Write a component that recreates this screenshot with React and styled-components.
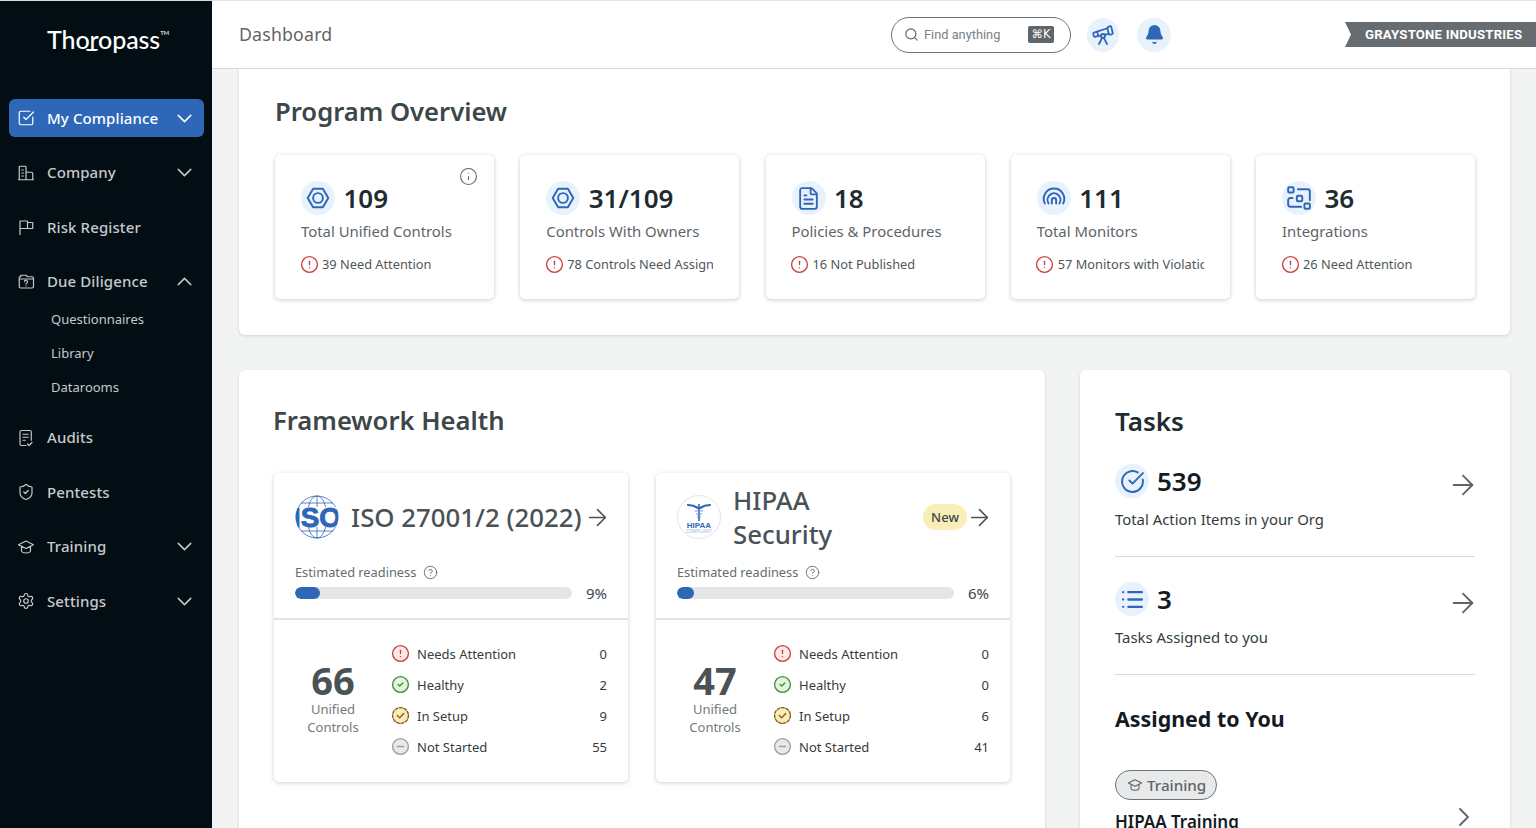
import React from 'react';
import styled, { createGlobalStyle } from 'styled-components';
import {
  ArrowRight,
  Bell,
  ChevronDown,
  ChevronRight,
  ChevronUp,
  CircleAlert,
  CircleCheck,
  CircleCheckBig,
  CircleHelp,
  CircleMinus,
  FileText,
  Info,
  List,
  Search,
  Settings,
  ShieldCheck,
  SquareCheckBig,
  Telescope,
} from 'lucide-react';

const BLUE = '#2f67b8';
const FONT = '"Noto Sans", "Open Sans", sans-serif';

const GlobalStyle = createGlobalStyle`
  html, body {
    margin: 0;
    height: 100%;
    overflow: hidden;
    background: #f2f3f3;
    font-family: ${FONT};
  }
  * { box-sizing: border-box; }
`;

const Page = styled.div`
  display: flex;
  height: 100vh;
  overflow: hidden;
`;

const Sidebar = styled.aside`
  width: 212px;
  flex: none;
  background: #030d14;
  border-top: 1px solid #d8dadb;
  padding: 0 8px 0 9px;
`;

const LogoRow = styled.div`
  height: 98px;
  padding: 20px 0 0 38px;
`;

const Logo = styled.div`
  position: relative;
  display: inline-block;
  font-family: Lato, ${FONT};
  font-size: 25px;
  font-weight: 500;
  letter-spacing: -0.1px;
  line-height: 36px;
  color: #fff;
  sup {
    font-size: 6px;
    line-height: 0;
    vertical-align: 14px;
  }
  &::after {
    content: '';
    position: absolute;
    left: 39px;
    top: 28px;
    width: 12px;
    height: 2px;
    background: #fff;
    border-radius: 0 0 4px 4px;
  }
`;

const NavItem = styled.div`
  display: flex;
  align-items: center;
  height: 38px;
  margin-bottom: ${(p) => (p.$tight ? '1px' : '16.5px')};
  padding: 0 7px 0 8px;
  border-radius: 6px;
  background: ${(p) => (p.$active ? BLUE : 'transparent')};
  color: ${(p) => (p.$active ? '#fff' : '#c6c9cb')};
  font-size: 15px;
  font-weight: 500;
  letter-spacing: 0.1px;
  svg { flex: none; }
`;

const NavLabel = styled.span`
  flex: 1;
  margin: -1px 0 0 12px;
`;

const SubItem = styled.div`
  height: 34px;
  padding-left: 42px;
  line-height: 34px;
  font-size: 13px;
  color: #c6c9cb;
`;

const SubList = styled.div`
  margin-bottom: 15px;
`;

const Main = styled.div`
  flex: 1;
  min-width: 0;
  display: flex;
  flex-direction: column;
`;

const Header = styled.header`
  height: 69px;
  flex: none;
  display: flex;
  align-items: center;
  padding: 0 0 0 27px;
  background: #fff;
  border-top: 1px solid #e3e4e5;
  border-bottom: 1px solid #d9dadb;
`;

const PageTitle = styled.div`
  flex: 1;
  margin-top: -1px;
  font-size: 17.7px;
  letter-spacing: 0.2px;
  color: #5f6568;
`;

const SearchBox = styled.div`
  width: 180px;
  height: 36px;
  display: flex;
  align-items: center;
  padding: 0 16px 0 12px;
  border: 1px solid #6d7376;
  border-radius: 18px;
  font-family: Roboto, sans-serif;
  font-size: 12.8px;
  color: #7c8285;
  svg { color: #5f6568; }
`;

const SearchText = styled.span`
  flex: 1;
  margin-left: 5px;
`;

const Kbd = styled.span`
  width: 26px;
  height: 17px;
  background: #5f6568;
  border-radius: 2px;
  color: #fff;
  font-size: 11.5px;
  line-height: 17px;
  text-align: center;
  font-family: "DejaVu Sans", sans-serif;
`;

const RoundButton = styled.div`
  width: ${(p) => p.$w}px;
  height: 34px;
  margin-left: ${(p) => p.$gap}px;
  display: flex;
  align-items: center;
  justify-content: center;
  border-radius: 50%;
  background: #e8f2fd;
  color: ${BLUE};
`;

const OrgBadge = styled.div`
  width: 191px;
  height: 25px;
  margin-left: 174px;
  padding-left: 20px;
  background: #666c6f;
  clip-path: polygon(0 0, 100% 0, 100% 100%, 0 100%, 6px 50%);
  font-family: Roboto, sans-serif;
  font-size: 13.2px;
  font-weight: 700;
  line-height: 25px;
  letter-spacing: 0.2px;
  color: #fff;
  white-space: nowrap;
`;

const Content = styled.div`
  flex: 1;
  min-height: 0;
  overflow: hidden;
  padding: 0 26px 0 27px;
`;

const Panel = styled.section`
  background: #fff;
  border-radius: 6px;
  box-shadow: 0 1px 3px rgba(30, 40, 50, 0.16);
`;

const OverviewPanel = styled(Panel)`
  height: 266px;
  padding: 23px 35px 0 36px;
  border-radius: 0 0 6px 6px;
`;

const PanelTitle = styled.h2`
  margin: 0 0 0 ${(p) => p.$shift || 0}px;
  font-size: 25.6px;
  line-height: 40px;
  font-weight: 600;
  color: #3d4649;
`;

const StatGrid = styled.div`
  display: grid;
  grid-template-columns: repeat(5, 219px);
  justify-content: space-between;
  margin-top: 23px;
`;

const StatCard = styled.div`
  position: relative;
  height: 144px;
  padding: 26px 26px 0 26px;
  border-radius: 5px;
  background: #fff;
  box-shadow: 0 1px 4px rgba(30, 40, 50, 0.24);
`;

const InfoMark = styled.span`
  position: absolute;
  top: 12px;
  right: 16px;
  color: #5f6568;
  display: flex;
`;

const StatHead = styled.div`
  display: flex;
  align-items: center;
  gap: 8.5px;
`;

const IconCircle = styled.span`
  width: 34px;
  height: 34px;
  flex: none;
  display: flex;
  align-items: center;
  justify-content: center;
  border-radius: 50%;
  background: #e8f2fd;
  color: ${BLUE};
`;

const StatValue = styled.span`
  font-size: 26px;
  line-height: 34px;
  font-weight: 600;
  color: ${(p) => p.$color || '#212b30'};
`;

const StatLabel = styled.div`
  margin-top: 5px;
  font-size: 14.9px;
  line-height: 22px;
  color: #5f6568;
  white-space: nowrap;
`;

const AlertRow = styled.div`
  display: flex;
  align-items: center;
  gap: 3.5px;
  margin-top: 11px;
  margin-left: -1.5px;
  height: 22px;
  font-size: 12.8px;
  color: #4f575b;
  white-space: nowrap;
  overflow: hidden;
  svg { flex: none; color: #c8413d; }
`;

const BottomRow = styled.div`
  display: grid;
  grid-template-columns: 806px 1fr;
  gap: 35px;
  margin-top: 35px;
`;

const FrameworkPanel = styled(Panel)`
  height: 520px;
  padding: 31px 35px 0;
`;

const FrameworkGrid = styled.div`
  display: grid;
  grid-template-columns: 354px 354px;
  gap: 28px;
  margin-top: 32px;
`;

const FrameworkCard = styled.div`
  height: 309px;
  border-radius: 5px;
  background: #fff;
  box-shadow: 0 1px 4px rgba(30, 40, 50, 0.22);
`;

const CardTop = styled.div`
  height: 147px;
  padding: 9px 21px 0;
  border-bottom: 2px solid #e2e3e4;
`;

const CardHead = styled.div`
  height: 70px;
  display: flex;
  align-items: center;
  color: #4a5256;
`;

const FrameworkName = styled.div`
  flex: ${(p) => (p.$grow ? 1 : 'none')};
  margin: 0 2px 0 12px;
  font-size: 25.8px;
  line-height: 34px;
  font-weight: 500;
  color: #4a5256;
`;

const HeadArrow = styled.span`
  display: flex;
  margin-right: -4px;
`;

const NewTag = styled.span`
  width: 44px;
  height: 26px;
  margin-right: -1px;
  border-radius: 13px;
  background: #faeeb8;
  font-size: 13px;
  font-weight: 500;
  line-height: 26px;
  text-align: center;
  color: #3d4649;
`;

const ReadyLabel = styled.div`
  display: flex;
  align-items: center;
  gap: 7px;
  margin-top: 10px;
  height: 20px;
  font-size: 12.8px;
  color: #666c6f;
`;

const BarRow = styled.div`
  display: flex;
  align-items: center;
  justify-content: space-between;
  height: 22px;
  font-size: 15px;
  color: #3d4649;
`;

const BarTrack = styled.div`
  width: 277px;
  height: 12px;
  border-radius: 6px;
  background: #e4e5e6;
  overflow: hidden;
`;

const BarFill = styled.div`
  height: 100%;
  border-radius: 6px;
  background: ${BLUE};
`;

const CardBottom = styled.div`
  display: grid;
  grid-template-columns: 118px 1fr;
  padding: 18px 21px 0 0;
`;

const CountBox = styled.div`
  padding-top: 22px;
  text-align: center;
  font-size: 13px;
  line-height: 18px;
  color: #737a7d;
`;

const CountValue = styled.div`
  font-size: 38px;
  line-height: 40px;
  font-weight: 700;
  color: #4a5256;
`;

const StatusRow = styled.div`
  display: flex;
  align-items: center;
  height: 31px;
  font-size: 13px;
  color: #333c40;
`;

const StatusText = styled.span`
  flex: 1;
  margin-left: 7px;
`;

const StatusDot = styled.span`
  width: 19px;
  height: 19px;
  flex: none;
  display: flex;
  margin-left: -1px;
  border-radius: 50%;
  background: radial-gradient(circle, ${(p) => p.$bg} 0 8px, transparent 8.5px);
  color: ${(p) => p.$color};
`;

const TasksPanel = styled(Panel)`
  height: 520px;
  padding: 30px 35px 0;
`;

const TasksTitle = styled.h2`
  margin: 0;
  font-size: 26px;
  line-height: 42px;
  font-weight: 600;
  color: #212b30;
`;

const TaskBlock = styled.div`
  height: ${(p) => p.$h}px;
  padding-top: ${(p) => p.$top}px;
  border-bottom: 1px solid #d6d8d9;
`;

const TaskHead = styled.div`
  display: flex;
  align-items: center;
  gap: 8px;
  height: 34px;
  color: #5f6568;
`;

const TaskArrow = styled.span`
  margin: 8px -4px 0 auto;
  display: flex;
`;

const TaskLabel = styled.div`
  margin-top: 10px;
  font-size: 14.9px;
  line-height: 22px;
  color: #333c40;
`;

const AssignedTitle = styled.h3`
  margin: 28px 0 0;
  font-size: 21.4px;
  line-height: 32px;
  font-weight: 700;
  color: #141b1f;
`;

const Pill = styled.div`
  display: flex;
  align-items: center;
  gap: 4px;
  width: fit-content;
  height: 30px;
  margin-top: 35px;
  padding: 0 10px 0 11px;
  border: 1px solid #6d7376;
  border-radius: 15px;
  background: #e8e9ea;
  font-size: 15.2px;
  font-weight: 500;
  color: #5f6568;
`;

const AssignedRow = styled.div`
  display: flex;
  align-items: flex-start;
  justify-content: space-between;
  height: 24px;
  margin-top: 10px;
  font-size: 17px;
  line-height: 24px;
  font-weight: 600;
  color: #141b1f;
  svg { color: #5f6568; margin: -9px -5px 0 0; }
`;

const line = { fill: 'none', stroke: 'currentColor', strokeLinecap: 'round', strokeLinejoin: 'round' };

const Glyph = ({ size = 18, width = 1.6, children }) => (
  <svg width={size} height={size} viewBox="0 0 24 24" {...line} strokeWidth={width}>
    {children}
  </svg>
);

const BuildingIcon = () => (
  <Glyph>
    <path d="M3 21V4a1 1 0 0 1 1-1h7a1 1 0 0 1 1 1v17M12 11h7a2 2 0 0 1 2 2v8M2 21h20M6.5 8h2M6.5 12h2M6.5 16h2" />
  </Glyph>
);

const FlagIcon = () => (
  <Glyph>
    <path d="M4 22V4h10v10H4M14 6h7v8h-7" />
  </Glyph>
);

const FolderAskIcon = () => (
  <Glyph>
    <path d="M3 18V6a1 1 0 0 1 1-1h1V3h7l2 2h6a2 2 0 0 1 2 2v11a2 2 0 0 1-2 2H5a2 2 0 0 1-2-2ZM3 8h18" />
    <path d="M10 11.5a2 2 0 1 1 3 1.8c-.7.4-1 .8-1 1.4M12 17.2v.1" />
  </Glyph>
);

const AuditIcon = () => (
  <Glyph>
    <path d="M12 22H6a2 2 0 0 1-2-2V4a2 2 0 0 1 2-2h11a2 2 0 0 1 2 2v11M8 7h7M8 11h7M8 15h3M14 20l2 2 4-4" />
  </Glyph>
);

const CapIcon = ({ size = 18 }) => (
  <Glyph size={size}>
    <path d="M12 4 2 9l10 5 10-5-10-5ZM6 11.5V17c0 1.6 3 3 6 3s6-1.4 6-3v-5.500" />
  </Glyph>
);

const NutIcon = () => (
  <Glyph size={26} width={1.8}>
    <path d="M7.500 3.500h9L21.500 12l-5 8.500h-9L2.500 12l5-8.500Z" />
    <circle cx="12" cy="12" r="4.500" />
  </Glyph>
);

const MonitorIcon = () => (
  <Glyph size={26} width={1.8}>
    <path d="M3.500 17a9.500 9.500 0 1 1 17 0M7 17a6 6 0 1 1 10 0M10 17v-3a2 2 0 0 1 4 0v3" />
  </Glyph>
);

const IntegrationIcon = () => (
  <Glyph size={26} width={1.8}>
    <rect x="2" y="2" width="5" height="5" rx="1" />
    <rect x="10" y="10" width="5" height="5" rx="1" />
    <rect x="17" y="17" width="5" height="5" rx="1" />
    <path d="M11 4h9a2 2 0 0 1 2 2v8M6 12H4a2 2 0 0 0-2 2v4a2 2 0 0 0 2 2h10" />
  </Glyph>
);

const SetupIcon = () => (
  <Glyph size={19} width={1.7}>
    <circle cx="12" cy="12" r="10" strokeDasharray="3.5 2.2" />
    <path d="m8 12 3 3 5-5.500" />
  </Glyph>
);

const IsoLogo = () => (
  <svg width="44" height="44" viewBox="0 0 44 44" style={{ flex: 'none' }}>
    <clipPath id="iso-clip">
      <circle cx="22" cy="22" r="21.500" />
    </clipPath>
    <g fill="none" stroke="#2f67b8" strokeWidth="0.8">
      <circle cx="22" cy="22" r="21" />
      <ellipse cx="22" cy="22" rx="10" ry="21" />
      <path d="M22 1v42M6 8h32M3 13h38M3 31h38M6 36h32" />
    </g>
    <rect x="0" y="12" width="44" height="20" fill="#fff" />
    <g clipPath="url(#iso-clip)">
      <text x="-2" y="32" fontFamily="Liberation Sans, sans-serif" fontWeight="700" fontSize="27" stroke="#2f67b8" strokeWidth="0.9" fill="#2f67b8" textLength="48" lengthAdjust="spacingAndGlyphs">ISO</text>
    </g>
  </svg>
);

const HipaaLogo = () => (
  <svg width="44" height="44" viewBox="0 0 44 44" style={{ flex: 'none' }}>
    <circle cx="22" cy="22" r="21.500" fill="#fff" stroke="#e3e4e5" />
    <path d="M11 10c4 0 7 1 10 3M33 10c-4 0-7 1-10 3" fill="none" stroke="#2f67b8" strokeWidth="2.200" strokeLinecap="round" />
    <path d="M22 9v17" stroke="#2f67b8" strokeWidth="1.600" />
    <path d="M18 16h8M19 19h6M20 22h4" stroke="#6f9ad6" strokeWidth="1.200" />
    <text x="22" y="33" textAnchor="middle" fontFamily="Liberation Sans, sans-serif" fontWeight="700" fontSize="8" fill="#2f67b8">HIPAA</text>
    <text x="22" y="37.500" textAnchor="middle" fontFamily="Liberation Sans, sans-serif" fontSize="4.500" fill="#9dbbe4">COMPLIANT</text>
  </svg>
);

const navIcons = {
  compliance: <SquareCheckBig size={18} strokeWidth={1.6} />,
  company: <BuildingIcon />,
  risk: <FlagIcon />,
  diligence: <FolderAskIcon />,
  audits: <AuditIcon />,
  pentests: <ShieldCheck size={18} strokeWidth={1.6} />,
  training: <CapIcon />,
  settings: <Settings size={18} strokeWidth={1.6} />,
};

const stats = [
  { icon: <NutIcon />, value: '109', label: 'Total Unified Controls', alert: '39 Need Attention', info: true },
  { icon: <NutIcon />, value: '31/109', label: 'Controls With Owners', alert: '78 Controls Need Assignment' },
  { icon: <FileText size={25} strokeWidth={1.8} />, value: '18', label: 'Policies & Procedures', alert: '16 Not Published' },
  { icon: <MonitorIcon />, value: '111', label: 'Total Monitors', alert: '57 Monitors with Violations' },
  { icon: <IntegrationIcon />, value: '36', label: 'Integrations', alert: '26 Need Attention' },
];

const frameworks = [
  { logo: <IsoLogo />, name: 'ISO 27001/2 (2022)', pct: 9, fill: 25, total: 66, counts: [0, 2, 9, 55] },
  { logo: <HipaaLogo />, name: <>HIPAA<br />Security</>, isNew: true, pct: 6, fill: 17, total: 47, counts: [0, 0, 6, 41] },
];

const statusKinds = [
  { label: 'Needs Attention', Icon: CircleAlert, bg: '#fbe9e8', color: '#c8413d' },
  { label: 'Healthy', Icon: CircleCheck, bg: '#e3f3dd', color: '#3f8f35' },
  { label: 'In Setup', Icon: SetupIcon, bg: '#fbeab8', color: '#7d5a1e' },
  { label: 'Not Started', Icon: CircleMinus, bg: '#e8e9ea', color: '#9a9fa2' },
];

const NavRow = ({ icon, label, open, chevron, active, tight }) => (
  <NavItem $active={active} $tight={tight}>
    {navIcons[icon]}
    <NavLabel>{label}</NavLabel>
    {chevron && (open ? <ChevronUp size={25} strokeWidth={1.4} /> : <ChevronDown size={25} strokeWidth={1.4} />)}
  </NavItem>
);

const Framework = ({ item }) => (
  <FrameworkCard>
    <CardTop>
      <CardHead>
        {item.logo}
        <FrameworkName $grow={item.isNew}>{item.name}</FrameworkName>
        {item.isNew && <NewTag>New</NewTag>}
        <HeadArrow>
          <ArrowRight size={27} strokeWidth={1.4} />
        </HeadArrow>
      </CardHead>
      <ReadyLabel>
        Estimated readiness
        <CircleHelp size={15} strokeWidth={1.5} />
      </ReadyLabel>
      <BarRow>
        <BarTrack>
          <BarFill style={{ width: item.fill }} />
        </BarTrack>
        {item.pct}%
      </BarRow>
    </CardTop>
    <CardBottom>
      <CountBox>
        <CountValue>{item.total}</CountValue>
        Unified
        <br />
        Controls
      </CountBox>
      <div>
        {statusKinds.map((s, i) => (
          <StatusRow key={s.label}>
            <StatusDot $bg={s.bg} $color={s.color}>
              <s.Icon size={19} strokeWidth={1.7} />
            </StatusDot>
            <StatusText>{s.label}</StatusText>
            {item.counts[i]}
          </StatusRow>
        ))}
      </div>
    </CardBottom>
  </FrameworkCard>
);

export default function App() {
  return (
    <Page>
      <GlobalStyle />
      <Sidebar>
        <LogoRow>
          <Logo>
            Thoropass<sup>TM</sup>
          </Logo>
        </LogoRow>
        <NavRow icon="compliance" label="My Compliance" chevron active />
        <NavRow icon="company" label="Company" chevron />
        <NavRow icon="risk" label="Risk Register" />
        <NavRow icon="diligence" label="Due Diligence" chevron open tight />
        <SubList>
          <SubItem>Questionnaires</SubItem>
          <SubItem>Library</SubItem>
          <SubItem>Datarooms</SubItem>
        </SubList>
        <NavRow icon="audits" label="Audits" />
        <NavRow icon="pentests" label="Pentests" />
        <NavRow icon="training" label="Training" chevron />
        <NavRow icon="settings" label="Settings" chevron />
      </Sidebar>
      <Main>
        <Header>
          <PageTitle>Dashboard</PageTitle>
          <SearchBox>
            <Search size={15} strokeWidth={1.9} />
            <SearchText>Find anything</SearchText>
            <Kbd>⌘K</Kbd>
          </SearchBox>
          <RoundButton $w={32} $gap={16}>
            <Telescope size={24} strokeWidth={1.8} />
          </RoundButton>
          <RoundButton $w={34} $gap={18}>
            <Bell size={21} fill="currentColor" strokeWidth={1.5} />
          </RoundButton>
          <OrgBadge>GRAYSTONE INDUSTRIES</OrgBadge>
        </Header>
        <Content>
          <OverviewPanel>
            <PanelTitle>Program Overview</PanelTitle>
            <StatGrid>
              {stats.map((s) => (
                <StatCard key={s.label}>
                  {s.info && (
                    <InfoMark>
                      <Info size={19} strokeWidth={1.3} />
                    </InfoMark>
                  )}
                  <StatHead>
                    <IconCircle>{s.icon}</IconCircle>
                    <StatValue>{s.value}</StatValue>
                  </StatHead>
                  <StatLabel>{s.label}</StatLabel>
                  <AlertRow>
                    <CircleAlert size={19} strokeWidth={1.7} />
                    {s.alert}
                  </AlertRow>
                </StatCard>
              ))}
            </StatGrid>
          </OverviewPanel>
          <BottomRow>
            <FrameworkPanel>
              <PanelTitle $shift={-1}>Framework Health</PanelTitle>
              <FrameworkGrid>
                {frameworks.map((f) => (
                  <Framework key={f.total} item={f} />
                ))}
              </FrameworkGrid>
            </FrameworkPanel>
            <TasksPanel>
              <TasksTitle>Tasks</TasksTitle>
              <TaskBlock $h={115} $top={22}>
                <TaskHead>
                  <IconCircle>
                    <CircleCheckBig size={25} strokeWidth={1.9} />
                  </IconCircle>
                  <StatValue $color="#141b1f">539</StatValue>
                  <TaskArrow>
                    <ArrowRight size={32} strokeWidth={1.4} />
                  </TaskArrow>
                </TaskHead>
                <TaskLabel>Total Action Items in your Org</TaskLabel>
              </TaskBlock>
              <TaskBlock $h={118} $top={25}>
                <TaskHead>
                  <IconCircle>
                    <List size={25} strokeWidth={2.2} />
                  </IconCircle>
                  <StatValue $color="#141b1f">3</StatValue>
                  <TaskArrow>
                    <ArrowRight size={32} strokeWidth={1.4} />
                  </TaskArrow>
                </TaskHead>
                <TaskLabel>Tasks Assigned to you</TaskLabel>
              </TaskBlock>
              <AssignedTitle>Assigned to You</AssignedTitle>
              <Pill>
                <CapIcon size={16} />
                Training
              </Pill>
              <AssignedRow>
                HIPAA Training
                <ChevronRight size={32} strokeWidth={1.4} />
              </AssignedRow>
            </TasksPanel>
          </BottomRow>
        </Content>
      </Main>
    </Page>
  );
}
